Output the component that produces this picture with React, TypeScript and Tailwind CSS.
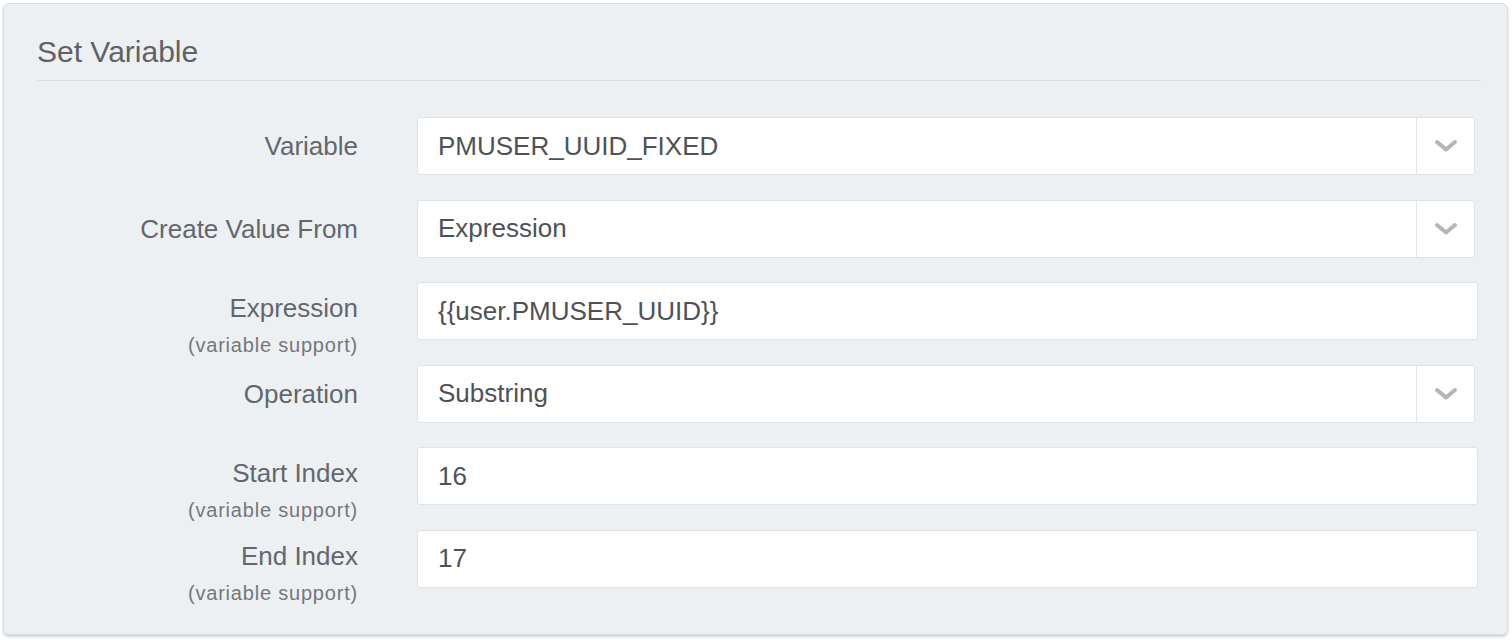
import React from 'react';

type Row = {
  label: string;
  value: string;
  select?: boolean;
  support?: boolean;
};

const rows: Row[] = [
  { label: 'Variable', value: 'PMUSER_UUID_FIXED', select: true },
  { label: 'Create Value From', value: 'Expression', select: true },
  { label: 'Expression', value: '{{user.PMUSER_UUID}}', support: true },
  { label: 'Operation', value: 'Substring', select: true },
  { label: 'Start Index', value: '16', support: true },
  { label: 'End Index', value: '17', support: true },
];

const Chevron = () => (
  <svg width="26" height="16" viewBox="0 0 26 16" fill="none">
    <path d="M4 4 L13 11.5 L22 4" stroke="#b5b5b5" strokeWidth="4" strokeLinecap="round" strokeLinejoin="round" />
  </svg>
);

const FieldRow = ({ row }: { row: Row }) => (
  <div className="flex h-[58px] items-start">
    {/* Label column */}
    <div
      className={
        row.support
          ? 'flex w-[321px] shrink-0 flex-col items-end pt-[11px]'
          : 'flex h-full w-[321px] shrink-0 flex-col items-end justify-center'
      }
    >
      <span className="text-[26px] leading-[30px] text-[#63676b]">{row.label}</span>
      {row.support && (
        <span className="text-[20px] leading-[44px] tracking-[0.8px] text-[#73777b]">(variable support)</span>
      )}
    </div>

    {/* Control */}
    <div
      className={
        'ml-[59px] flex h-full overflow-hidden rounded-[3px] border border-[#dfe3e6] bg-white ' +
        (row.select ? 'w-[1058px]' : 'w-[1061px]')
      }
    >
      <div className="flex flex-1 items-center pl-[20px] text-[26px] text-[#4e5256]">{row.value}</div>
      {row.select && (
        <div className="flex w-[58px] items-center justify-center border-l border-[#e2e5e8]">
          <Chevron />
        </div>
      )}
    </div>
  </div>
);

export default function App() {
  return (
    <div className="h-[640px] w-[1512px] bg-white pl-[3px] pt-[3px]" style={{ fontFamily: '"Liberation Sans", Arial, sans-serif' }}>
      <div className="h-[632px] w-[1505px] rounded-[6px] border border-[#d9dde0] bg-[#edf0f3] pl-[33px] pr-[26px] shadow-[0_2px_3px_rgba(0,0,0,0.18)]">
        {/* Header */}
        <div className="border-b border-[#dadee2] pb-[10px] pt-[30px]">
          <h2 className="text-[30px] leading-[36px] text-[#5e6266]">Set Variable</h2>
        </div>

        {/* Form */}
        <div className="mt-[36px] flex flex-col gap-[24.5px]">
          {rows.map((row) => (
            <FieldRow key={row.label} row={row} />
          ))}
        </div>
      </div>
    </div>
  );
}
